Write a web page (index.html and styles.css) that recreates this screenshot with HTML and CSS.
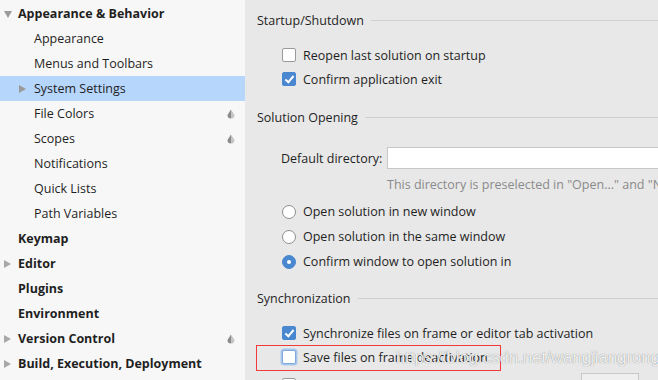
FILE: index.html
```html
<!DOCTYPE html>
<html>
<head>
<meta charset="utf-8">
<link rel="stylesheet" href="styles.css">
</head>
<body>
<div class="app">
  <nav class="sidebar">
    <div class="row top"><span class="arrow down"></span>Appearance &amp; Behavior</div>
    <div class="row sub">Appearance</div>
    <div class="row sub">Menus and Toolbars</div>
    <div class="row sub selected"><span class="arrow right subarrow"></span>System Settings</div>
    <div class="row sub">File Colors<svg class="proj" viewBox="0 0 10 10" width="10" height="10"><path d="M5 0.5 L1.5 6 Q1.5 9.5 5 9.5 Z" fill="#8a8a8a"/><path d="M5 0.5 L8.5 6 Q8.5 9.5 5 9.5 Z" fill="#c4c4c4"/></svg></div>
    <div class="row sub">Scopes<svg class="proj" viewBox="0 0 10 10" width="10" height="10"><path d="M5 0.5 L1.5 6 Q1.5 9.5 5 9.5 Z" fill="#8a8a8a"/><path d="M5 0.5 L8.5 6 Q8.5 9.5 5 9.5 Z" fill="#c4c4c4"/></svg></div>
    <div class="row sub">Notifications</div>
    <div class="row sub">Quick Lists</div>
    <div class="row sub">Path Variables</div>
    <div class="row top">Keymap</div>
    <div class="row top"><span class="arrow right"></span>Editor</div>
    <div class="row top">Plugins</div>
    <div class="row top">Environment</div>
    <div class="row top"><span class="arrow right"></span>Version Control<svg class="proj" viewBox="0 0 10 10" width="10" height="10"><path d="M5 0.5 L1.5 6 Q1.5 9.5 5 9.5 Z" fill="#8a8a8a"/><path d="M5 0.5 L8.5 6 Q8.5 9.5 5 9.5 Z" fill="#c4c4c4"/></svg></div>
    <div class="row top"><span class="arrow right"></span>Build, Execution, Deployment</div>
  </nav>
  <main class="content">
    <div class="group-title first"><span>Startup/Shutdown</span><i class="rule"></i></div>
    <div class="opt gap-a"><span class="cb"></span>Reopen last solution on startup</div>
    <div class="opt"><span class="cb on"></span>Confirm application exit</div>

    <div class="group-title gap-b"><span>Solution Opening</span><i class="rule"></i></div>
    <div class="field gap-c"><label class="field-label">Default directory:</label><div class="input"></div></div>
    <div class="hint">This directory is preselected in "Open..." and "New..." dialogs</div>
    <div class="opt radio-row gap-d"><span class="rb"></span>Open solution in new window</div>
    <div class="opt radio-row"><span class="rb"></span>Open solution in the same window</div>
    <div class="opt radio-row"><span class="rb on"></span>Confirm window to open solution in</div>

    <div class="group-title gap-e"><span>Synchronization</span><i class="rule"></i></div>
    <div class="opt gap-a"><span class="cb on"></span>Synchronize files on frame or editor tab activation</div>
    <div class="opt"><span class="cb focus"></span>Save files on frame deactivation</div>
    <div class="opt last"><span class="cb"></span>Save files automatically if application is idle for<span class="small-input"></span></div>

    <div class="annot"></div>
    <div class="watermark">https://blog.csdn.net/wangjiangrong</div>
  </main>
</div>
</body>
</html>
```
FILE: styles.css
```css
html, body {
  margin: 0;
  padding: 0;
  height: 100%;
  overflow: hidden;
}
body {
  font-family: "Open Sans", Lato, sans-serif;
  font-size: 12.5px;
  color: #1f1f1f;
}
.app {
  display: flex;
  width: 658px;
  height: 380px;
}
.sidebar {
  width: 245px;
  flex: none;
  background: #f7f7f7;
  padding-top: 1px;
  box-sizing: border-box;
}
.row {
  height: 25px;
  display: flex;
  align-items: center;
  position: relative;
  box-sizing: border-box;
  white-space: nowrap;
}
.row.top {
  padding-left: 18px;
  font-weight: bold;
}
.row.sub {
  padding-left: 34px;
}
.row.selected {
  background: #b6d6fb;
}
.arrow {
  position: absolute;
  width: 0;
  height: 0;
}
.arrow.down {
  left: 4px;
  top: 10px;
  border-left: 4px solid transparent;
  border-right: 4px solid transparent;
  border-top: 7px solid #9b9b9b;
}
.arrow.right {
  left: 4px;
  top: 9px;
  border-top: 4px solid transparent;
  border-bottom: 4px solid transparent;
  border-left: 7px solid #a8a8a8;
}
.arrow.right.subarrow {
  left: 19px;
  border-left-color: #9a9a9a;
}
.proj {
  position: absolute;
  left: 226px;
  top: 8px;
}
.content {
  flex: 1;
  background: #e8e8e8;
  padding-left: 12px;
  position: relative;
  overflow: hidden;
  white-space: nowrap;
}
.group-title {
  height: 24px;
  display: flex;
  align-items: center;
}
.group-title.first {
  margin-top: 8px;
}
.group-title .rule {
  flex: 1;
  height: 1px;
  background: #cfcfcf;
  margin-left: 7px;
  margin-top: 1px;
}
.opt {
  height: 24px;
  display: flex;
  align-items: center;
  padding-left: 25px;
}
.opt.last {
  height: 32px;
}
.radio-row {
  height: 25px;
}
.gap-a { margin-top: 11px; }
.gap-b { margin-top: 14px; }
.gap-c { margin-top: 17px; }
.gap-d { margin-top: 3px; }
.gap-e { margin-top: 12px; }
.cb {
  width: 12px;
  height: 12px;
  border: 1px solid #9a9a9a;
  border-radius: 2px;
  background: #fff;
  margin-right: 7px;
  flex: none;
  position: relative;
}
.cb.on {
  background: #4a87d1;
  border-color: #4a87d1;
}
.cb.on::after {
  content: "";
  position: absolute;
  left: 4px;
  top: 1px;
  width: 3px;
  height: 7px;
  border-right: 2px solid #fff;
  border-bottom: 2px solid #fff;
  transform: rotate(40deg);
}
.cb.focus {
  border-color: #7fa8dd;
  box-shadow: 0 0 0 1.5px #a9c6ec;
}
.rb {
  width: 12px;
  height: 12px;
  border: 1px solid #8e8e8e;
  border-radius: 50%;
  background: #fff;
  margin-right: 7px;
  flex: none;
  position: relative;
}
.rb.on {
  background: #4a87d1;
  border-color: #4a87d1;
}
.rb.on::after {
  content: "";
  position: absolute;
  left: 4px;
  top: 4px;
  width: 4px;
  height: 4px;
  border-radius: 50%;
  background: #fff;
}
.field {
  display: flex;
  align-items: center;
  height: 24px;
  padding-left: 24px;
}
.field-label {
  width: 106px;
  flex: none;
}
.input {
  flex: 1;
  height: 22px;
  background: #fff;
  border: 1px solid #c8c8c8;
  border-right: none;
  box-sizing: border-box;
}
.hint {
  margin-top: 2px;
  height: 24px;
  display: flex;
  align-items: center;
  padding-left: 130px;
  color: #8a8a8a;
}
.small-input {
  display: inline-block;
  width: 56px;
  height: 22px;
  background: #efefef;
  border: 1px solid #c8c8c8;
  margin-left: 8px;
  flex: none;
}
.annot {
  position: absolute;
  left: 11px;
  top: 345px;
  width: 243px;
  height: 24px;
  border: 1px solid #f23a3a;
}
.watermark {
  position: absolute;
  left: 151px;
  top: 348px;
  font-family: "Liberation Sans", Arial, sans-serif;
  font-size: 16.8px;
  color: rgba(255, 255, 255, 0.9);
  text-shadow: 0 0 1px rgba(0, 0, 0, 0.5);
}
```
